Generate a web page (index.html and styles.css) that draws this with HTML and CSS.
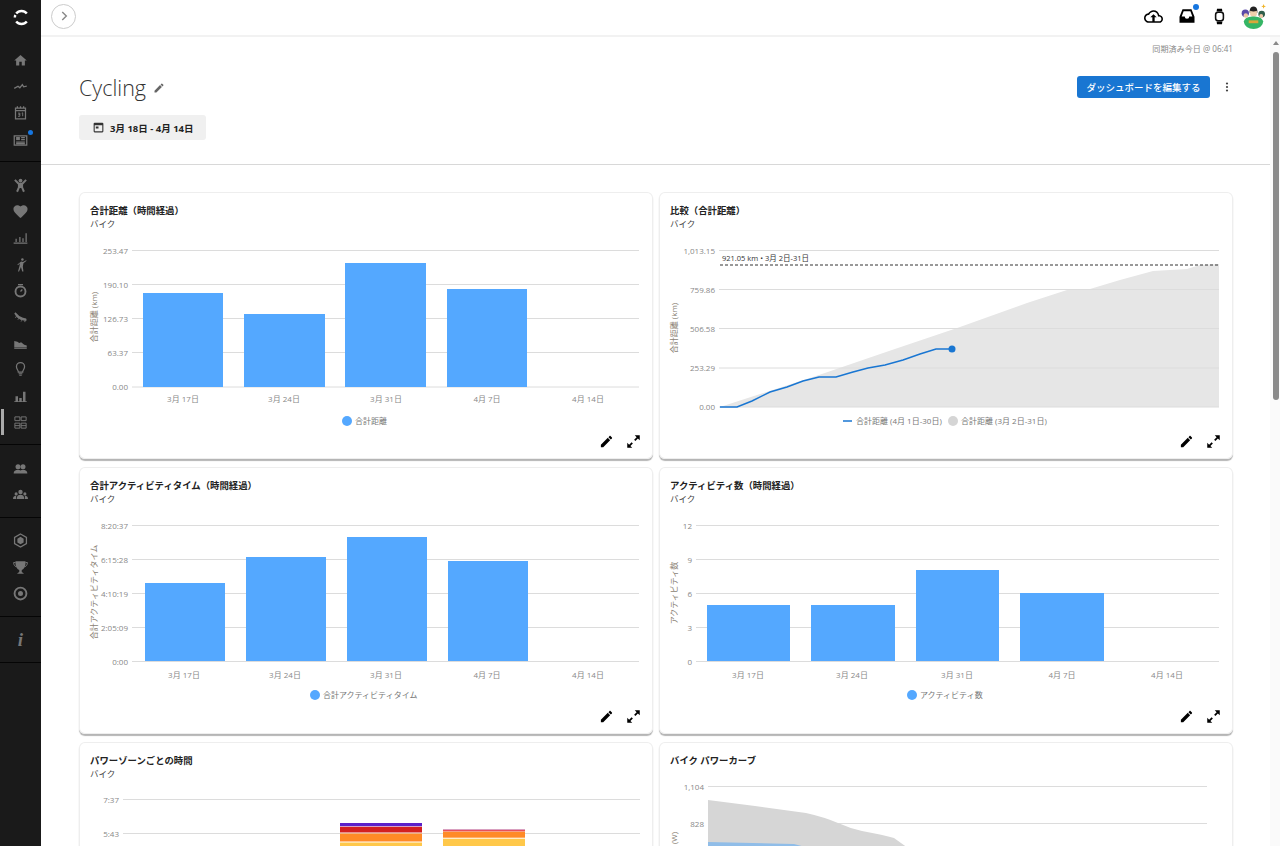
FILE: index.html
```html
<!DOCTYPE html>
<html lang="ja">
<head>
    <meta charset="UTF-8">
    <meta name="viewport" content="width=device-width, initial-scale=1.0">
    <title>Cycling</title>
    <link rel="stylesheet" href="styles.css">
</head>
<body>
    <!-- Sidebar -->
    <nav class="sidebar">
        <div class="logo">
            <svg viewBox="0 0 24 24" width="17" height="17"><path d="M19.500 6.500A9.500 9.500 0 0 0 4.500 6.500M4.500 17.500A9.500 9.500 0 0 0 19.500 17.500M2.600 12a9.400 9.400 0 0 1 .7-3.500" fill="none" stroke="#fff" stroke-width="3.400"/></svg>
        </div>
        <div class="nav-group">
            <a class="nav-item"><svg viewBox="0 0 24 24"><path d="M10 20v-6h4v6h5v-8h3L12 3 2 12h3v8z"/></svg></a>
            <a class="nav-item"><svg viewBox="0 0 24 24"><path class="line" d="M2 15l6-3.500 3 2.500 4-5 2 3.500 5-1"/></svg></a>
            <a class="nav-item"><svg viewBox="0 0 24 24"><path class="line" d="M4 5h16v17H4zM4 9h16M7 2v4M12 2v4M17 2v4"/><path class="line thin" d="M8 13h3v2H9h2v3H8M14 13l1.500-.5V18"/></svg></a>
            <a class="nav-item has-dot"><svg viewBox="0 0 24 24"><path class="line" d="M2 6h20v15H2zM5 16h14M5 18.500h14M13 9h6M13 12h6"/><path d="M5 8h6v5H5z"/></svg></a>
        </div>
        <div class="nav-group">
            <a class="nav-item"><svg viewBox="0 0 24 24"><circle cx="12" cy="4" r="3"/><path class="line wide" d="M3 3l6 6h6l6-6M9.500 9v6l-3 7M14.500 9v6l3 7"/><path d="M9 8h6v8H9z"/></svg></a>
            <a class="nav-item big"><svg viewBox="0 0 24 24"><path d="M12 21.350l-1.450-1.320C5.400 15.360 2 12.280 2 8.500 2 5.420 4.420 3 7.500 3c1.740 0 3.410.81 4.500 2.090C13.090 3.810 14.760 3 16.500 3 19.580 3 22 5.420 22 8.500c0 3.780-3.400 6.860-8.550 11.540L12 21.350z"/></svg></a>
            <a class="nav-item"><svg viewBox="0 0 24 24"><path d="M1 20h22v2H1zM4 14h2v5H4zM10 11h2v8h-2zM15 13h2v6h-2zM20 5h2v14h-2z"/></svg></a>
            <a class="nav-item"><svg viewBox="0 0 24 24"><circle cx="15" cy="4" r="2"/><path d="M13 7l3 1 5-3 .7 1-5 4-1 5 1 8h-2l-2-7-3 7H8l2.500-9 .5-4-3 3-1-1z"/></svg></a>
            <a class="nav-item"><svg viewBox="0 0 24 24"><circle class="line thick" cx="12" cy="13.500" r="8"/><path class="line" d="M8 2.500h8M12 13.500l3-3"/></svg></a>
            <a class="nav-item"><svg viewBox="0 0 24 24"><path d="M2 7l2-2 6 6 6 3 5 1 1 3-2 1-8-2-6-4z"/><path class="line thin" d="M5 12l-1 2M9 15l-1 2M14 18l-1 2M19 19v2"/></svg></a>
            <a class="nav-item"><svg viewBox="0 0 24 24"><path d="M2 8l5 1 3 2 3-1 5 4 4 1v3H2z"/><path d="M2 18.500h20V20.500H2z"/></svg></a>
            <a class="nav-item"><svg viewBox="0 0 24 24"><path class="line" d="M8.500 16c0-3-3-4.500-3-8.500a6.500 6.500 0 0 1 13 0c0 4-3 5.500-3 8.500z"/><path d="M9 18h6v1.500H9zM10 20.500h4V22h-4z"/></svg></a>
            <a class="nav-item"><svg viewBox="0 0 24 24"><path d="M2 21h20v1.500H2zM4 13h4v8H4zM10 16h4v5h-4zM16 6h4v15h-4z"/></svg></a>
            <a class="nav-item active"><svg viewBox="0 0 24 24"><path class="line thin" d="M3 3h8v6H3zM13 3h8v6h-8zM3 13h8v8H3zM13 13h8v8h-8zM3 17h8M13 17h8"/></svg></a>
        </div>
        <div class="nav-group">
            <a class="nav-item"><svg viewBox="0 0 24 24"><circle cx="8" cy="9" r="4"/><circle cx="16" cy="9" r="4"/><path d="M1 20c0-4 3-6 7-6 1.500 0 3 .3 4 1 1-.7 2.500-1 4-1 4 0 7 2 7 6z"/></svg></a>
            <a class="nav-item"><svg viewBox="0 0 24 24"><circle cx="12" cy="8" r="3.500"/><circle cx="5" cy="11" r="2.500"/><circle cx="19" cy="11" r="2.500"/><path d="M6 19c0-4 2-6.500 6-6.500s6 2.500 6 6.500zM0 19c0-3 2-5 5-5v5zM24 19c0-3-2-5-5-5v5z"/></svg></a>
        </div>
        <div class="nav-group">
            <a class="nav-item"><svg viewBox="0 0 24 24"><path class="line" d="M12 1.500l9.500 5.500v10L12 22.500 2.500 17V7z"/><path d="M12 6l5 3v6l-5 3-5-3V9z"/></svg></a>
            <a class="nav-item"><svg viewBox="0 0 24 24"><path d="M4 2h16v4c0 5-3 9-6 10v3l3 2v1H7v-1l3-2v-3C7 15 4 11 4 6z"/><path class="line thin" d="M4 4H1c0 4 2 6 4 7M20 4h3c0 4-2 6-4 7"/></svg></a>
            <a class="nav-item"><svg viewBox="0 0 24 24"><circle class="line thick" cx="12" cy="12" r="9.500"/><circle cx="12" cy="12" r="4"/></svg></a>
        </div>
        <div class="nav-group">
            <a class="nav-item info">i</a>
        </div>
    </nav>

    <div class="main">
        <!-- Top bar -->
        <header class="topbar">
            <button class="expand-btn"><svg viewBox="0 0 24 24" width="14" height="14"><path d="M9 5l7 7-7 7" fill="none" stroke="#888" stroke-width="2.400"/></svg></button>
            <div class="top-icons">
                <svg viewBox="0 0 24 24" width="19" height="19"><path d="M19.350 10.040C18.670 6.590 15.640 4 12 4 9.110 4 6.600 5.640 5.350 8.040 2.340 8.360 0 10.910 0 14c0 3.310 2.690 6 6 6h13c2.760 0 5-2.240 5-5 0-2.640-2.050-4.780-4.650-4.960zM19 18H6c-2.210 0-4-1.790-4-4 0-2.050 1.530-3.760 3.560-3.970l1.070-.11.5-.95C8.080 7.140 9.940 6 12 6c2.620 0 4.880 1.860 5.390 4.430l.3 1.500 1.530.11c1.560.1 2.780 1.410 2.780 2.960 0 1.650-1.350 3-3 3zM8 13h2.550v7h2.900v-7H16l-4-4z"/></svg>
                <span class="inbox">
                    <svg viewBox="0 0 24 24" width="18" height="18"><path fill-rule="evenodd" d="M6 3h12l4 10v8H2v-8zM7.500 5.500h9l2.600 7H15a3 3 0 0 1-6 0H4.900z"/></svg>
                </span>
                <svg viewBox="0 0 24 24" width="17" height="17"><rect x="6.500" y="6" width="11" height="12" rx="3.500" fill="none" stroke="#111" stroke-width="2.200"/><path d="M8.500 1h7l.6 4H7.900zM7.900 19h8.200l-.6 4h-7z"/></svg>
                <svg class="avatar" viewBox="0 0 26 26" width="25" height="25">
                    <circle cx="4.500" cy="9.500" r="3.800" fill="#5b4aa8"/>
                    <circle cx="5" cy="12" r="2.300" fill="#eec9a8"/>
                    <circle cx="21.500" cy="10.500" r="3.500" fill="#2f5d4a"/>
                    <circle cx="21" cy="12.500" r="2" fill="#eec9a8"/>
                    <path d="M9 7c0-6 8-6 8 0v2H9z" fill="#222"/>
                    <path d="M9.500 7c2 1 5 1 7 0v4c0 3-7 3-7 0z" fill="#f0d0ac"/>
                    <path d="M3 18c1-4 6-5 10-5s9 1 10 5c0 5-5 8-10 8S3 23 3 18z" fill="#35b565"/>
                    <path d="M8 17h10v3H8z" fill="#d8a83a"/>
                    <path d="M23.500 0l.7 1.800 1.800.7-1.800.7-.7 1.800-.7-1.800-1.800-.7 1.800-.7z" fill="#f0b429"/>
                </svg>
            </div>
        </header>

        <div class="body-row">
            <div class="page">
                <p class="sync">同期済み今日 @ 06:41</p>

                <div class="title-row">
                    <div class="title-left">
                        <h1>Cycling</h1>
                        <svg viewBox="0 0 24 24" width="12" height="12" fill="#666"><path d="M3 17.250V21h3.750L17.810 9.940l-3.750-3.750L3 17.250zM20.710 7.040c.39-.39.39-1.020 0-1.410l-2.340-2.340c-.39-.39-1.020-.39-1.410 0l-1.830 1.830 3.750 3.750 1.830-1.830z"/></svg>
                    </div>
                    <div class="title-right">
                        <button class="btn">ダッシュボードを編集する</button>
                        <svg viewBox="0 0 24 24" width="12" height="14" fill="#444"><circle cx="12" cy="5" r="2.200"/><circle cx="12" cy="12" r="2.200"/><circle cx="12" cy="19" r="2.200"/></svg>
                    </div>
                </div>

                <div class="date-chip">
                    <svg viewBox="0 0 24 24" width="13" height="13" fill="#333"><path d="M19 3H5a2 2 0 0 0-2 2v14a2 2 0 0 0 2 2h14a2 2 0 0 0 2-2V5a2 2 0 0 0-2-2zm0 16H5V8h14zM7 10h5v4H7z"/></svg>
                    <span>3月 18日 - 4月 14日</span>
                </div>

                <hr class="divider">

                <div class="cards">
                    <!-- Total distance -->
                    <section class="card">
                        <div class="card-head"><h3>合計距離（時間経過）</h3><p>バイク</p></div>
                        <svg class="chart" viewBox="0 0 574 194" width="574" height="194">
                            <g class="grid"><path d="M53 14.500H560M53 48.500H560M53 82.500H560M53 116.500H560M53 151H560"/></g>
                            <g class="bars">
                                <rect x="64" y="57" width="80" height="94"/><rect x="165" y="78" width="81" height="73"/>
                                <rect x="266" y="27" width="81" height="124"/><rect x="368" y="53" width="80" height="98"/>
                            </g>
                            <g class="tick end">
                                <text x="49" y="17.500">253.47</text><text x="49" y="51.500">190.10</text><text x="49" y="85.500">126.73</text><text x="49" y="119.500">63.37</text><text x="49" y="154">0.00</text>
                            </g>
                            <g class="tick mid">
                                <text x="104" y="166">3月 17日</text><text x="205" y="166">3月 24日</text><text x="307" y="166">3月 31日</text><text x="408" y="166">4月 7日</text><text x="509" y="166">4月 14日</text>
                            </g>
                            <text class="axis" transform="translate(18 81) rotate(-90)">合計距離 (km)</text>
                            <circle class="dot" cx="268" cy="185" r="5"/>
                            <text class="legend" x="276" y="188">合計距離</text>
                        </svg>
                        <div class="card-foot">
                            <svg viewBox="0 0 24 24" width="15" height="15"><path d="M3 17.250V21h3.750L17.810 9.940l-3.750-3.750L3 17.250zM20.710 7.040c.39-.39.39-1.020 0-1.410l-2.340-2.340c-.39-.39-1.020-.39-1.410 0l-1.830 1.830 3.750 3.750 1.830-1.830z"/></svg>
                            <svg viewBox="0 0 24 24" width="15" height="15"><path d="M14 2h8v8l-3-3-4 4-2-2 4-4zM10 22H2v-8l3 3 4-4 2 2-4 4z"/></svg>
                        </div>
                    </section>

                    <!-- Comparison -->
                    <section class="card">
                        <div class="card-head"><h3>比較（合計距離）</h3><p>バイク</p></div>
                        <svg class="chart" viewBox="0 0 574 194" width="574" height="194">
                            <polygon class="area" points="61,171 160,139 230,115 301,91 368,67 408,54 431,53 461,44 494,35 528,33 541,29 560,28 560,171"/>
                            <g class="grid"><path d="M60 14.500H560M60 53.500H560M60 92.500H560M60 132H560M60 171H560"/></g>
                            <path class="dash" d="M61 29H560"/>
                            <text class="note" x="63" y="25">921.05 km • 3月 2日-31日</text>
                            <polyline class="trend" points="61,171 78,171 93,165 111,156 128,151 144,145 160,141 177,141 194,136 209,132 226,129 244,124 261,118 277,113 293,113"/>
                            <circle class="trend-dot" cx="293" cy="113" r="3.500"/>
                            <g class="tick end">
                                <text x="56" y="17.500">1,013.15</text><text x="56" y="56.500">759.86</text><text x="56" y="95.500">506.58</text><text x="56" y="135">253.29</text><text x="56" y="174">0.00</text>
                            </g>
                            <text class="axis" transform="translate(18 92) rotate(-90)">合計距離 (km)</text>
                            <path class="trend" d="M184 185H193"/>
                            <text class="legend" x="197" y="188">合計距離 (4月 1日-30日)</text>
                            <circle class="dot-grey" cx="294" cy="185" r="5"/>
                            <text class="legend" x="302" y="188">合計距離 (3月 2日-31日)</text>
                        </svg>
                        <div class="card-foot">
                            <svg viewBox="0 0 24 24" width="15" height="15"><path d="M3 17.250V21h3.750L17.810 9.940l-3.750-3.750L3 17.250zM20.710 7.040c.39-.39.39-1.020 0-1.410l-2.340-2.340c-.39-.39-1.020-.39-1.410 0l-1.830 1.830 3.750 3.750 1.830-1.830z"/></svg>
                            <svg viewBox="0 0 24 24" width="15" height="15"><path d="M14 2h8v8l-3-3-4 4-2-2 4-4zM10 22H2v-8l3 3 4-4 2 2-4 4z"/></svg>
                        </div>
                    </section>

                    <!-- Total activity time -->
                    <section class="card">
                        <div class="card-head"><h3>合計アクティビティタイム（時間経過）</h3><p>バイク</p></div>
                        <svg class="chart" viewBox="0 0 574 194" width="574" height="194">
                            <g class="grid"><path d="M53 14.500H560M53 48.500H560M53 82.500H560M53 116.500H560M53 150.500H560"/></g>
                            <g class="bars">
                                <rect x="66" y="72" width="80" height="78"/><rect x="167" y="46" width="80" height="104"/>
                                <rect x="268" y="26" width="80" height="124"/><rect x="369" y="50" width="80" height="100"/>
                            </g>
                            <g class="tick end">
                                <text x="49" y="17.500">8:20:37</text><text x="49" y="51.500">6:15:28</text><text x="49" y="85.500">4:10:19</text><text x="49" y="119.500">2:05:09</text><text x="49" y="153.500">0:00</text>
                            </g>
                            <g class="tick mid">
                                <text x="105" y="167">3月 17日</text><text x="206" y="167">3月 24日</text><text x="307" y="167">3月 31日</text><text x="408" y="167">4月 7日</text><text x="509" y="167">4月 14日</text>
                            </g>
                            <text class="axis" transform="translate(18 81) rotate(-90)">合計アクティビティタイム</text>
                            <circle class="dot" cx="236" cy="184" r="5"/>
                            <text class="legend" x="244" y="187">合計アクティビティタイム</text>
                        </svg>
                        <div class="card-foot">
                            <svg viewBox="0 0 24 24" width="15" height="15"><path d="M3 17.250V21h3.750L17.810 9.940l-3.750-3.750L3 17.250zM20.710 7.040c.39-.39.39-1.020 0-1.410l-2.340-2.340c-.39-.39-1.020-.39-1.410 0l-1.830 1.830 3.750 3.750 1.830-1.830z"/></svg>
                            <svg viewBox="0 0 24 24" width="15" height="15"><path d="M14 2h8v8l-3-3-4 4-2-2 4-4zM10 22H2v-8l3 3 4-4 2 2-4 4z"/></svg>
                        </div>
                    </section>

                    <!-- Activity count -->
                    <section class="card">
                        <div class="card-head"><h3>アクティビティ数（時間経過）</h3><p>バイク</p></div>
                        <svg class="chart" viewBox="0 0 574 194" width="574" height="194">
                            <g class="grid"><path d="M37 14.500H560M37 48.500H560M37 82.500H560M37 116.500H560M37 150.500H560"/></g>
                            <g class="bars">
                                <rect x="48" y="94" width="83" height="56"/><rect x="152" y="94" width="84" height="56"/>
                                <rect x="257" y="59" width="83" height="91"/><rect x="361" y="82" width="84" height="68"/>
                            </g>
                            <g class="tick end">
                                <text x="33" y="17.500">12</text><text x="33" y="51.500">9</text><text x="33" y="85.500">6</text><text x="33" y="119.500">3</text><text x="33" y="153.500">0</text>
                            </g>
                            <g class="tick mid">
                                <text x="89" y="167">3月 17日</text><text x="193" y="167">3月 24日</text><text x="298" y="167">3月 31日</text><text x="403" y="167">4月 7日</text><text x="508" y="167">4月 14日</text>
                            </g>
                            <text class="axis" transform="translate(18 82) rotate(-90)">アクティビティ数</text>
                            <circle class="dot" cx="253" cy="184" r="5"/>
                            <text class="legend" x="261" y="187">アクティビティ数</text>
                        </svg>
                        <div class="card-foot">
                            <svg viewBox="0 0 24 24" width="15" height="15"><path d="M3 17.250V21h3.750L17.810 9.940l-3.750-3.750L3 17.250zM20.710 7.040c.39-.39.39-1.020 0-1.410l-2.340-2.340c-.39-.39-1.020-.39-1.410 0l-1.830 1.830 3.750 3.750 1.830-1.830z"/></svg>
                            <svg viewBox="0 0 24 24" width="15" height="15"><path d="M14 2h8v8l-3-3-4 4-2-2 4-4zM10 22H2v-8l3 3 4-4 2 2-4 4z"/></svg>
                        </div>
                    </section>

                    <!-- Time in power zones -->
                    <section class="card">
                        <div class="card-head"><h3>パワーゾーンごとの時間</h3><p>バイク</p></div>
                        <svg class="chart" viewBox="0 0 574 194" width="574" height="194">
                            <g class="grid"><path d="M44 13.500H561M44 47.500H561"/></g>
                            <rect x="261" y="37" width="82" height="3" fill="#5b21c9"/>
                            <rect x="261" y="40" width="82" height="1" fill="#d9a0c0"/>
                            <rect x="261" y="41" width="82" height="5.500" fill="#d32020"/>
                            <rect x="261" y="47.500" width="82" height="8" fill="#ff8a26"/>
                            <rect x="261" y="56.500" width="82" height="40" fill="#ffc84a"/>
                            <rect x="364" y="43" width="82" height="1" fill="#d9a0c0"/>
                            <rect x="364" y="44" width="82" height="1.500" fill="#e8505a"/>
                            <rect x="364" y="45.700" width="82" height="6" fill="#ff8a26"/>
                            <rect x="364" y="52.700" width="82" height="40" fill="#ffc84a"/>
                            <g class="tick end"><text x="40" y="16.500">7:37</text><text x="40" y="50.500">5:43</text></g>
                        </svg>
                    </section>

                    <!-- Power curve -->
                    <section class="card">
                        <div class="card-head"><h3>バイク パワーカーブ</h3></div>
                        <svg class="chart" viewBox="0 0 574 194" width="574" height="194">
                            <g class="grid"><path d="M49 0.500H548M49 37.500H548"/></g>
                            <path d="M49 14L96 20L147 27Q165 31 179 37Q190 42 203 45Q225 49 235 52L249 62H49z" fill="#d6d6d6"/>
                            <path d="M49 56L135 58L150 62H49z" fill="#90bde8"/>
                            <g class="tick end"><text x="45" y="3.500">1,104</text><text x="45" y="40.500">828</text></g>
                            <text class="axis" transform="translate(18 52) rotate(-90)">(W)</text>
                        </svg>
                    </section>
                </div>
            </div>

            <!-- Page scrollbar -->
            <div class="scrollbar">
                <span class="arrow-up"></span>
                <span class="thumb"></span>
            </div>
        </div>
    </div>
</body>
</html>
```

FILE: styles.css
```css
/* General Reset */
* {
    margin: 0;
    padding: 0;
    box-sizing: border-box;
}

/* Body Styling */
body {
    font-family: 'Open Sans', 'Noto Sans CJK JP', sans-serif;
    display: flex;
    height: 846px;
    overflow: hidden;
    background: #fff;
    color: #222;
}

/* Sidebar */
.sidebar {
    width: 41px;
    flex-shrink: 0;
    background: #1a1a1a;
}

.logo {
    height: 37px;
    display: flex;
    justify-content: center;
    align-items: center;
    padding: 0 0 3px 1px;
}

.nav-group {
    padding: 10px 0 9px;
    border-bottom: 1px solid #050505;
}

.nav-item {
    position: relative;
    height: 26.3px;
    display: flex;
    justify-content: center;
    align-items: center;
}

.nav-item svg {
    width: 15px;
    height: 15px;
    fill: #777;
}

.nav-item.big svg {
    width: 17px;
    height: 17px;
}

.nav-item .line {
    fill: none;
    stroke: #777;
    stroke-width: 2;
}

.nav-item .thin {
    stroke-width: 1.5;
}

.nav-item .thick {
    stroke-width: 3;
}

.nav-item .wide {
    stroke-width: 3.2;
}

.has-dot::after {
    content: "";
    position: absolute;
    top: 4px;
    right: 8px;
    width: 5px;
    height: 5px;
    border-radius: 50%;
    background: #1676e0;
}

.active::before {
    content: "";
    position: absolute;
    left: 1px;
    top: 0;
    width: 3px;
    height: 26px;
    background: #aaa;
}

.info {
    font-family: 'Liberation Serif', serif;
    font-style: italic;
    font-weight: bold;
    font-size: 19px;
    color: #777;
}

/* Main Area */
.main {
    flex: 1;
    min-width: 0;
    min-height: 0;
    display: flex;
    flex-direction: column;
}

.topbar {
    height: 37px;
    flex-shrink: 0;
    display: flex;
    justify-content: space-between;
    align-items: center;
    padding: 0 14px 3px 10px;
    border-bottom: 2px solid #f2f2f2;
}

.expand-btn {
    width: 25px;
    height: 25px;
    border: 1px solid #ccc;
    border-radius: 50%;
    background: #fff;
    display: flex;
    justify-content: center;
    align-items: center;
}

.top-icons {
    display: flex;
    align-items: center;
    gap: 15px;
}

.avatar {
    margin-left: -2px;
}

.inbox {
    position: relative;
    display: flex;
}

.inbox::after {
    content: "";
    position: absolute;
    top: -3px;
    right: -3px;
    width: 6px;
    height: 6px;
    border-radius: 50%;
    background: #1676e0;
}

.body-row {
    flex: 1;
    min-height: 0;
    display: flex;
}

.page {
    flex: 1;
    min-width: 0;
    padding: 0 37px 0 38px;
    overflow: hidden;
}

.sync {
    margin-top: 6px;
    height: 12px;
    line-height: 12px;
    text-align: right;
    font-size: 8.1px;
    color: #888;
}

/* Title Row */
.title-row {
    margin-top: 21px;
    height: 24px;
    display: flex;
    justify-content: space-between;
    align-items: center;
}

.title-left {
    display: flex;
    align-items: center;
    gap: 7px;
}

.title-left h1 {
    font-size: 21.5px;
    font-weight: 300;
    line-height: 22px;
    padding-bottom: 1px;
    color: #333;
}

.title-right {
    display: flex;
    align-items: center;
    gap: 11px;
    padding-bottom: 2px;
}

.btn {
    width: 133px;
    height: 22px;
    border: none;
    border-radius: 3px;
    background: #1976d2;
    color: #fff;
    font-family: inherit;
    font-size: 9.5px;
    font-weight: 500;
}

.date-chip {
    margin-top: 15px;
    width: 127px;
    height: 25px;
    border-radius: 3px;
    background: #f0f0f0;
    display: flex;
    align-items: center;
    gap: 5px;
    padding-left: 13px;
    font-size: 9.5px;
    font-weight: 700;
    color: #222;
}

.divider {
    margin: 24px -37px 0 -38px;
    border: none;
    border-top: 1px solid #d8d8d8;
}

/* Cards */
.cards {
    margin-top: 27px;
    display: grid;
    grid-template-columns: 574px 574px;
    grid-auto-rows: 267px;
    gap: 8px 6px;
}

.card {
    border-radius: 6px;
    background: #fff;
    box-shadow: inset 0 0 0 1px #eee, 0 2px 1px #b5b5b5;
}

.card-head {
    height: 44px;
    padding: 12px 11px 0;
}

.card-head h3 {
    font-size: 9.4px;
    font-weight: 700;
    line-height: 13px;
    color: #222;
}

.card-head p {
    font-size: 8.5px;
    line-height: 14px;
    color: #444;
}

.chart {
    display: block;
    overflow: visible;
}

.card-foot {
    display: flex;
    justify-content: flex-end;
    gap: 12px;
    padding: 4px 12px 0 0;
}

/* Chart Parts */
.grid path {
    fill: none;
    stroke: #dcdcdc;
    stroke-width: 1;
}

.bars rect {
    fill: #54a8ff;
}

.tick text {
    font-size: 8px;
    fill: #888;
}

.tick.end text {
    text-anchor: end;
}

.tick.mid text {
    text-anchor: middle;
}

.axis {
    font-size: 8px;
    fill: #8a7f75;
    text-anchor: middle;
}

.legend {
    font-size: 8px;
    fill: #777;
}

.dot {
    fill: #54a8ff;
}

.dot-grey {
    fill: #d5d5d5;
}

.area {
    fill: #e6e6e6;
}

.dash {
    fill: none;
    stroke: #333;
    stroke-width: 1;
    stroke-dasharray: 3 2;
}

.note {
    font-size: 7.5px;
    fill: #333;
}

.trend {
    fill: none;
    stroke: #1976d2;
    stroke-width: 1.5;
}

.trend-dot {
    fill: #1976d2;
}

/* Scrollbar */
.scrollbar {
    position: relative;
    width: 10px;
    flex-shrink: 0;
    background: #fafafa;
}

.arrow-up {
    position: absolute;
    top: 4px;
    left: 3px;
    border-left: 3px solid transparent;
    border-right: 3px solid transparent;
    border-bottom: 4px solid #888;
}

.thumb {
    position: absolute;
    top: 15px;
    left: 3px;
    width: 6px;
    height: 348px;
    border-radius: 3px;
    background: #8a8a8a;
}
```
